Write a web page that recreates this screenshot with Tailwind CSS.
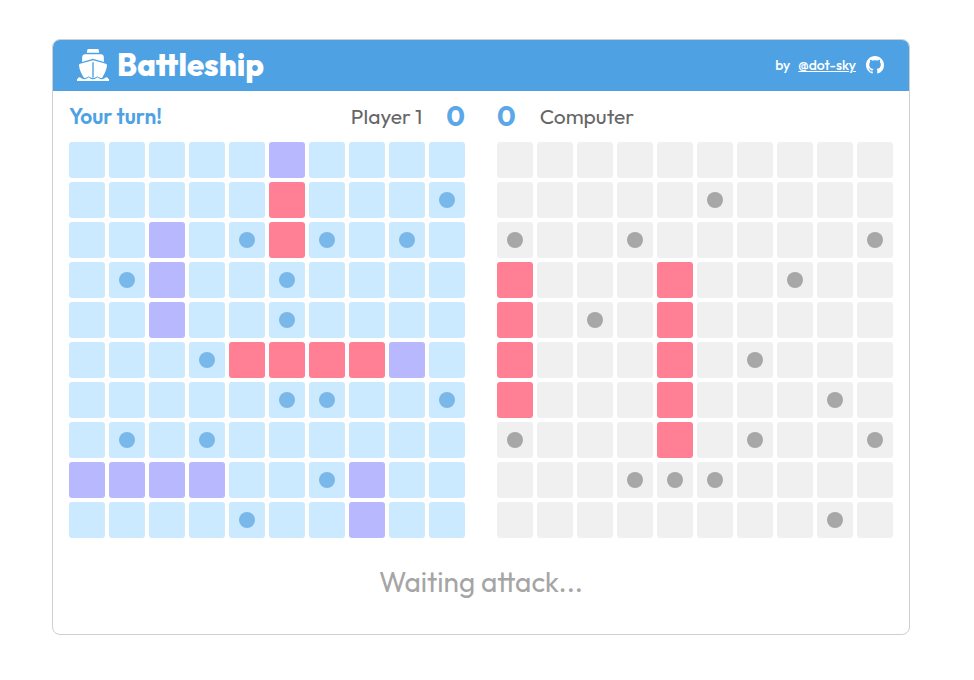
<!DOCTYPE html>
<html lang="en">
<head>
<meta charset="utf-8">
<meta name="viewport" content="width=device-width, initial-scale=1">
<title>Battleship</title>
<script src="https://cdn.jsdelivr.net/npm/@tailwindcss/browser@4"></script>
</head>
<body class="bg-white font-['Outfit','Lato',sans-serif] pt-[39px] pr-3 pb-11">
<main class="mx-auto w-fit overflow-hidden rounded-lg border border-[#cfcfcf]">
  <header class="flex h-[51px] items-center justify-between bg-[#4ea2e4] px-6 pb-px text-white">
    <h1 class="flex items-center gap-2 text-[31px] leading-[34px] font-extrabold">
      <svg class="size-8" viewBox="0 0 32 32" fill="currentColor" aria-hidden="true">
        <path d="M11.600 0h8.800c.7 0 1.200.4 1.300 1l.5 2.700H9.800l.5-2.700c.1-.6.600-1 1.300-1z"/>
        <path d="M8 5.200h16c1.600 0 2.700 1.100 2.800 2.700l.2 5L16.800 10a2.500 2.500 0 0 0-1.600 0L5 12.900l.2-5C5.300 6.300 6.400 5.200 8 5.200z"/>
        <path fill-rule="evenodd" d="M16 11.200l12.800 3.600c.9.3 1.300.9 1.200 1.700-.6 4.700-2.500 8.700-5 12.500-1.700-.1-3.300-.7-4.500-1.800-2.600 2.200-6.400 2.200-9 0C10.300 28.300 8.700 28.900 7 29c-2.500-3.800-4.400-7.800-5-12.500-.1-.8.3-1.400 1.200-1.700zM15.300 13.300v14.900h1.400V13.300z"/>
        <path d="M2.200 28.300c.9 0 1.500.3 2.200.9 1.700 1.300 4 1.300 5.700 0l1.400-1 1.400 1c1.800 1.300 4.400 1.300 6.200 0l1.400-1 1.400 1c1.700 1.300 4 1.300 5.700 0 .7-.6 1.300-.9 2.200-.9.900 0 .9 1.600 2.200 1.700V32H0v-2c1.300-.1 1.300-1.700 2.200-1.700z"/>
      </svg>
      Battleship
    </h1>
    <p class="flex items-center gap-2 text-[14px] leading-5 font-medium">
      by
      <a class="flex items-center gap-2.5" href="#dot-sky">
        <span class="underline">@dot-sky</span>
        <svg class="mr-px size-[18px]" viewBox="0 0 16 16" fill="currentColor" aria-hidden="true"><path d="M8 0C3.580 0 0 3.580 0 8c0 3.540 2.290 6.530 5.470 7.590.4.070.550-.170.550-.380 0-.190-.010-.820-.010-1.490-2.010.370-2.530-.490-2.690-.940-.090-.230-.480-.940-.820-1.130-.280-.150-.680-.520-.010-.530.630-.010 1.080.580 1.230.820.720 1.210 1.870.870 2.330.660.070-.520.280-.870.510-1.070-1.780-.200-3.640-.890-3.640-3.950 0-.870.310-1.590.820-2.150-.080-.200-.360-1.020.080-2.120 0 0 .670-.210 2.200.820.640-.180 1.320-.270 2-.270s1.360.090 2 .270c1.530-1.040 2.200-.820 2.200-.820.440 1.100.160 1.920.080 2.120.510.560.820 1.270.820 2.150 0 3.070-1.870 3.750-3.650 3.950.290.250.540.730.540 1.480 0 1.070-.010 1.930-.010 2.200 0 .210.150.460.550.380A8.010 8.010 0 0 0 16 8c0-4.420-3.580-8-8-8z"/></svg>
      </a>
    </p>
  </header>
  <div class="flex flex-wrap gap-x-8 px-4">
    <section aria-label="Player 1">
      <div class="flex h-[51px] items-center justify-between pb-px">
        <p class="text-[21px] leading-7 font-semibold text-[#4ea2e4]">Your turn!</p>
        <div class="flex items-center gap-6 text-[#666]">
          <h2 class="text-[21px] leading-7">Player 1</h2>
          <span class="text-[28px] leading-8 font-bold text-[#5ba7e7]">0</span>
        </div>
      </div>
      <div id="player" class="grid w-fit grid-cols-10 gap-1"></div>
    </section>
    <section aria-label="Computer">
      <div class="flex h-[51px] items-center gap-6 pb-px text-[#666]">
        <span class="text-[28px] leading-8 font-bold text-[#5ba7e7]">0</span>
        <h2 class="text-[21px] leading-7">Computer</h2>
      </div>
      <div id="computer" class="grid w-fit grid-cols-10 gap-1"></div>
    </section>
  </div>
  <p class="pt-6 pb-8 text-center text-[28px] leading-10 text-[#a5a5a5]" role="status">Waiting attack...</p>
</main>
<script>
  // . water, s ship, x hit, o miss
  const player = [
    '.....s....',
    '.....x...o',
    '..s.oxo.o.',
    '.os..o....',
    '..s..o....',
    '...oxxxxs.',
    '.....oo..o',
    '.o.o......',
    'ssss..os..',
    '....o..s..'
  ];
  const computer = [
    '..........',
    '.....o....',
    'o..o.....o',
    'x...x..o..',
    'x.o.x.....',
    'x...x.o...',
    'x...x...o.',
    'o...x.o..o',
    '...ooo....',
    '........o.'
  ];
  const names = { '.': 'water', s: 'ship', x: 'hit', o: 'miss' };
  function draw(id, rows, tag, base, dot) {
    const board = document.getElementById(id);
    rows.forEach((row, y) => [...row].forEach((c, x) => {
      const cell = document.createElement(tag);
      const fill = c === 'x' ? 'bg-[#ff8095]' : c === 's' ? 'bg-[#b8b8ff]' : base;
      cell.className = 'flex size-9 items-center justify-center rounded-[3px] ' + fill;
      if (tag === 'button') {
        cell.type = 'button';
        cell.setAttribute('aria-label', 'ABCDEFGHIJ'[x] + (y + 1) + ' ' + (c === '.' ? 'unknown' : names[c]));
      }
      if (c === 'o') {
        const mark = document.createElement('span');
        mark.className = 'size-4 rounded-full ' + dot;
        cell.append(mark);
      }
      board.append(cell);
    }));
  }
  draw('player', player, 'div', 'bg-[#cbeaff]', 'bg-[#7ab8ea]');
  draw('computer', computer, 'button', 'bg-[#f0f0f0]', 'bg-[#a7a7a7]');
</script>
</body>
</html>
